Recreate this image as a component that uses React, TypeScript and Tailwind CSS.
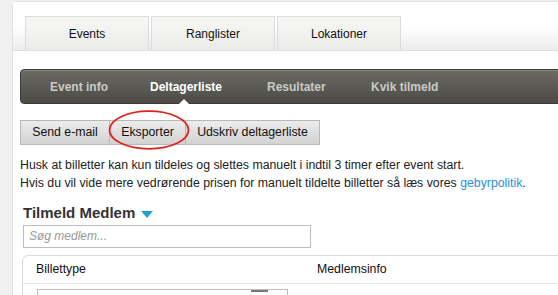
export default function App() {
  return (
    <div className="h-[295px] w-[558px] overflow-hidden bg-[#f0f0f0] pl-[12px] pt-px font-['Liberation_Sans',Arial,sans-serif] text-[12px] text-[#222]">
      <div className="h-[400px] w-[600px] rounded-tl-[5px] border-l border-t border-[#e2e2e2] bg-white">
        {/* top tabs */}
        <div className="flex h-[49px] items-end gap-[2px] border-b border-[#e0e0e0] bg-gradient-to-b from-white from-50% to-[#ececec] pl-[12px]">
          {['Events', 'Ranglister', 'Lokationer'].map((t) => (
            <div
              key={t}
              className="flex h-[34px] w-[124px] items-center justify-center border border-b-0 border-[#dcdcdc] bg-gradient-to-b from-[#f7f7f5] to-[#ebebea] text-[12px] text-[#111]"
            >
              {t}
            </div>
          ))}
        </div>

        <div className="pl-[7px] pt-[18px]">
          {/* dark nav */}
          <div className="relative flex h-[35px] items-center rounded-l-[4px] border border-[#3d3c39] bg-gradient-to-b from-[#6c6a65] to-[#4d4b46] pl-[29px] text-[12px] font-bold shadow-[inset_0_1px_0_#85837e]">
            <span className="w-[100px] text-[#c9c9c5]">Event info</span>
            <span className="w-[117px] text-white">Deltagerliste</span>
            <span className="w-[104px] text-[#c9c9c5]">Resultater</span>
            <span className="text-[#c9c9c5]">Kvik tilmeld</span>
            <div className="absolute bottom-[-1px] left-[158px] h-0 w-0 border-x-[5px] border-b-[5px] border-x-transparent border-b-white" />
          </div>

          {/* buttons */}
          <div className="relative mt-[16px] flex">
            <button className="h-[25px] w-[90px] border border-[#b8b8b8] bg-gradient-to-b from-[#ececec] to-[#d2d2d2] text-[12.3px] text-[#111]">
              Send e-mail
            </button>
            <button className="h-[25px] w-[76px] border border-l-0 border-[#b8b8b8] bg-gradient-to-b from-[#ececec] to-[#d2d2d2] text-[12.3px] text-[#111]">
              Eksporter
            </button>
            <button className="h-[25px] w-[134px] border border-l-0 border-[#b8b8b8] bg-gradient-to-b from-[#ececec] to-[#d2d2d2] text-[12.3px] text-[#111]">
              Udskriv deltagerliste
            </button>
            <svg className="absolute left-[88px] top-[-10px]" width="82" height="40" viewBox="0 0 82 40">
              <ellipse cx="41" cy="20" rx="39.5" ry="18.8" fill="none" stroke="#e0201e" strokeWidth="1.8" />
            </svg>
          </div>

          <div className="mt-[11px] text-[12.3px] leading-[18px]">
            <p>Husk at billetter kan kun tildeles og slettes manuelt i indtil 3 timer efter event start.</p>
            <p>
              Hvis du vil vide mere vedrørende prisen for manuelt tildelte billetter så læs vores{' '}
              <span className="text-[#2a90d2]">gebyrpolitik</span>.
            </p>
          </div>

          <div className="ml-[3px] mt-[10px] flex items-center gap-[6px] text-[15px] font-bold text-[#333]">
            Tilmeld Medlem
            <svg width="12" height="7" viewBox="0 0 12 7" className="mt-[2px]">
              <polygon points="0,0 12,0 6,7" fill="#1aa3cc" />
            </svg>
          </div>

          <div className="ml-[3px] mt-0 flex h-[23px] w-[288px] items-center border border-[#bdbdbd] px-[5px] text-[12px] italic text-[#999]">
            Søg medlem...
          </div>

          {/* table card */}
          <div className="ml-[2px] mt-[7px] rounded-tl-[6px] border-l border-t border-[#dcdcdc]">
            <div className="flex h-[28px] items-center border-b border-[#e6e6e6] pl-[13px] text-[12.3px] text-[#111]">
              <span className="w-[281px]">Billettype</span>
              <span>Medlemsinfo</span>
            </div>
            <div className="pl-[14px] pt-[5px]">
              <div className="relative h-[22px] w-[251px] border border-[#bbb]">
                <div className="absolute right-[19px] top-0 h-[2px] w-[17px] bg-[#777]" />
              </div>
            </div>
          </div>
        </div>
      </div>
    </div>
  )
}
